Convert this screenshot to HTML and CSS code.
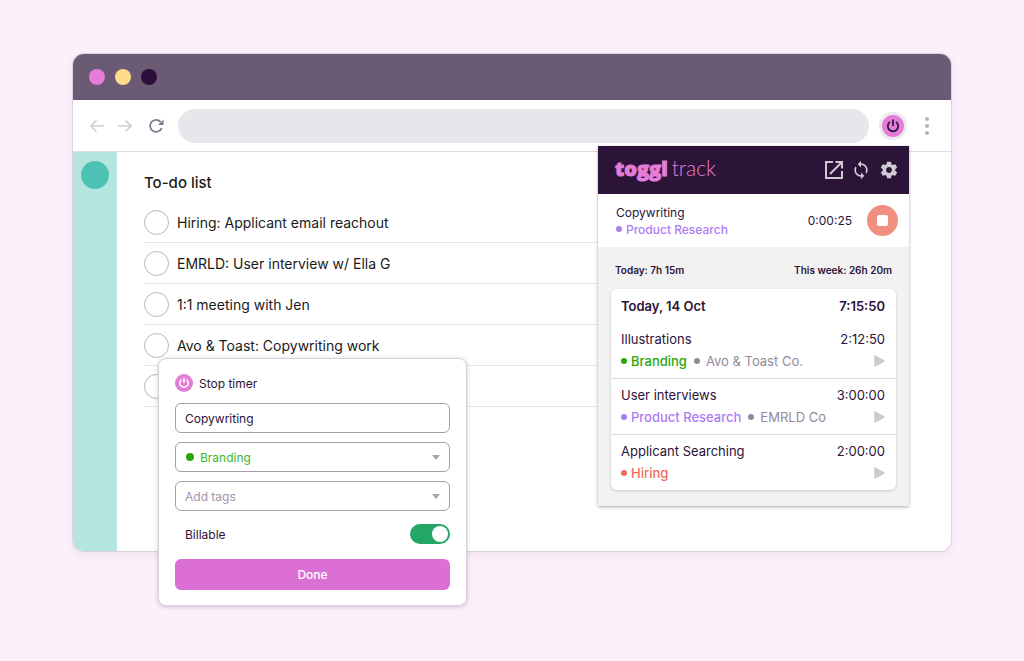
FILE: index.html
```html
<!DOCTYPE html>
<html lang="en">
<head>
    <meta charset="UTF-8">
    <meta name="viewport" content="width=device-width, initial-scale=1.0">
    <title>Toggl Track browser extension</title>
    <link rel="stylesheet" href="styles.css">
</head>
<body>
    <div class="browser">
        <div class="titlebar">
            <span class="light light-pink"></span>
            <span class="light light-yellow"></span>
            <span class="light light-dark"></span>
        </div>

        <div class="toolbar">
            <button class="nav-button" aria-label="Back">
                <svg width="14" height="14" viewBox="0 0 14 14" fill="none" stroke="#d3ccd7" stroke-width="1.6">
                    <path d="M14 7H1M6.5 1.5L1 7l5.500 5.500"/>
                </svg>
            </button>
            <button class="nav-button" aria-label="Forward">
                <svg width="14" height="14" viewBox="0 0 14 14" fill="none" stroke="#d3ccd7" stroke-width="1.6">
                    <path d="M0 7h13M7.500 1.500L13 7l-5.500 5.500"/>
                </svg>
            </button>
            <button class="nav-button" aria-label="Reload">
                <svg width="18" height="16" viewBox="-2 0 18 16" fill="none">
                    <path d="M13.700 10A6 6 0 1 1 12.600 3.900" stroke="#85758f" stroke-width="1.8"/>
                    <path d="M15.500 1.500V7H10z" fill="#85758f"/>
                </svg>
            </button>
            <input class="address" type="text" aria-label="Address">
            <button class="extension-button" aria-label="Toggl Track">
                <svg width="22" height="22" viewBox="0 0 22 22" fill="none">
                    <circle cx="11" cy="11" r="11" fill="#e57cd8"/>
                    <path d="M8 6.900a5.200 5.200 0 1 0 6 0M11 4.500V11" stroke="#2c1338" stroke-width="1.7"/>
                </svg>
            </button>
            <button class="nav-button menu-button" aria-label="Menu">
                <svg width="4" height="18" viewBox="0 0 4 18" fill="#b9b0bf">
                    <circle cx="2" cy="2" r="2"/>
                    <circle cx="2" cy="9" r="2"/>
                    <circle cx="2" cy="16" r="2"/>
                </svg>
            </button>
        </div>

        <div class="page">
            <div class="sidebar">
                <span class="avatar"></span>
            </div>
            <main class="todo">
                <h1>To-do list</h1>
                <ul class="todo-list">
                    <li><label><input type="checkbox"> Hiring: Applicant email reachout</label></li>
                    <li><label><input type="checkbox"> EMRLD: User interview w/ Ella G</label></li>
                    <li><label><input type="checkbox"> 1:1 meeting with Jen</label></li>
                    <li><label><input type="checkbox"> Avo &amp; Toast: Copywriting work</label></li>
                    <li><label><input type="checkbox" aria-label="Task"></label></li>
                </ul>
            </main>
        </div>

        <section class="tracker">
            <header class="tracker-header">
                <div class="logo"><span class="logo-toggl">toggl</span><span class="logo-track">track</span></div>
                <button class="icon-button" aria-label="Open">
                    <svg width="18" height="18" viewBox="0 0 18 18" fill="none" stroke="#cfcad1" stroke-width="2">
                        <path d="M8 1H1v16h16v-7M10.500 1H17v6.500M17 1L5 13"/>
                    </svg>
                </button>
                <button class="icon-button" aria-label="Sync">
                    <svg width="20" height="20" viewBox="0 0 24 24" fill="#cfcad1">
                        <path d="M12 4V1L8 5l4 4V6c3.310 0 6 2.690 6 6 0 1.010-.250 1.970-.700 2.800l1.460 1.460A7.930 7.930 0 0 0 20 12c0-4.420-3.580-8-8-8zm0 14c-3.310 0-6-2.690-6-6 0-1.010.250-1.970.700-2.800L5.240 7.740A7.930 7.930 0 0 0 4 12c0 4.420 3.580 8 8 8v3l4-4-4-4v3z"/>
                    </svg>
                </button>
                <button class="icon-button" aria-label="Settings">
                    <svg width="20" height="20" viewBox="0 0 24 24" fill="#cfcad1">
                        <path d="M19.430 12.980c.040-.320.070-.640.070-.980s-.030-.660-.070-.980l2.110-1.650c.190-.150.240-.420.120-.640l-2-3.460c-.120-.220-.390-.300-.610-.220l-2.490 1c-.520-.400-1.080-.730-1.690-.980l-.380-2.650A.488.488 0 0 0 14 2h-4c-.250 0-.460.180-.490.420l-.380 2.650c-.610.250-1.170.590-1.690.980l-2.490-1c-.230-.090-.490 0-.610.220l-2 3.460c-.130.220-.070.490.120.640l2.110 1.650c-.040.320-.070.650-.070.980s.030.660.070.980l-2.110 1.650c-.190.150-.240.420-.120.640l2 3.460c.120.220.390.300.610.220l2.490-1c.520.400 1.080.730 1.690.980l.380 2.650c.030.240.240.420.490.420h4c.250 0 .460-.180.490-.420l.380-2.650c.610-.250 1.170-.590 1.690-.980l2.490 1c.230.090.490 0 .610-.220l2-3.460c.120-.220.070-.490-.120-.640l-2.110-1.650zM12 15.500c-1.930 0-3.500-1.570-3.500-3.500s1.570-3.500 3.500-3.500 3.500 1.570 3.500 3.500-1.570 3.500-3.500 3.500z"/>
                    </svg>
                </button>
            </header>

            <div class="current">
                <div class="current-info">
                    <div>Copywriting</div>
                    <div class="project purple">Product Research</div>
                </div>
                <span class="current-time">0:00:25</span>
                <button class="stop-button" aria-label="Stop"><span></span></button>
            </div>

            <div class="summary">
                <span>Today: 7h 15m</span>
                <span>This week: 26h 20m</span>
            </div>

            <div class="entries">
                <div class="entries-head">
                    <span>Today, 14 Oct</span>
                    <span>7:15:50</span>
                </div>
                <div class="entry">
                    <div class="entry-row"><span>Illustrations</span><span>2:12:50</span></div>
                    <div class="entry-row">
                        <span class="project green">Branding</span>
                        <span class="client">Avo &amp; Toast Co.</span>
                        <button class="play-button" aria-label="Continue Illustrations">
                            <svg width="11" height="12" viewBox="0 0 11 12"><path d="M1 1v10l9-5z" fill="#cfc9d3" stroke="#cfc9d3" stroke-width="1.500" stroke-linejoin="round"/></svg>
                        </button>
                    </div>
                </div>
                <div class="entry">
                    <div class="entry-row"><span>User interviews</span><span>3:00:00</span></div>
                    <div class="entry-row">
                        <span class="project purple">Product Research</span>
                        <span class="client">EMRLD Co</span>
                        <button class="play-button" aria-label="Continue User interviews">
                            <svg width="11" height="12" viewBox="0 0 11 12"><path d="M1 1v10l9-5z" fill="#cfc9d3" stroke="#cfc9d3" stroke-width="1.500" stroke-linejoin="round"/></svg>
                        </button>
                    </div>
                </div>
                <div class="entry">
                    <div class="entry-row"><span>Applicant Searching</span><span>2:00:00</span></div>
                    <div class="entry-row">
                        <span class="project red">Hiring</span>
                        <button class="play-button" aria-label="Continue Applicant Searching">
                            <svg width="11" height="12" viewBox="0 0 11 12"><path d="M1 1v10l9-5z" fill="#cfc9d3" stroke="#cfc9d3" stroke-width="1.500" stroke-linejoin="round"/></svg>
                        </button>
                    </div>
                </div>
            </div>
        </section>

        <form class="timer-form">
            <button class="stop-timer" type="button">
                <svg width="18" height="18" viewBox="0 0 18 18" fill="none">
                    <circle cx="9" cy="9" r="9" fill="#e57cd8"/>
                    <path d="M6.600 5.600a4.200 4.200 0 1 0 4.800 0M9 4v5" stroke="#fff" stroke-width="1.500"/>
                </svg>
                Stop timer
            </button>
            <input class="field" type="text" value="Copywriting" aria-label="Description">
            <div class="field">
                <span class="dot"></span>
                <select class="green-text" aria-label="Project">
                    <option>Branding</option>
                </select>
                <svg class="caret" width="8" height="5" viewBox="0 0 8 5"><path d="M0 0h8L4 5z" fill="#aaa5ad"/></svg>
            </div>
            <div class="field">
                <select class="placeholder" aria-label="Tags">
                    <option>Add tags</option>
                </select>
                <svg class="caret" width="8" height="5" viewBox="0 0 8 5"><path d="M0 0h8L4 5z" fill="#aaa5ad"/></svg>
            </div>
            <label class="billable">Billable <input type="checkbox" checked></label>
            <button class="done-button" type="button">Done</button>
        </form>
    </div>
</body>
</html>
```
FILE: styles.css
```css
* {
    box-sizing: border-box;
}
body {
    display: flex;
    flex-direction: column;
    min-height: 100vh;
    margin: 0;
    padding: 54px 73px 110px;
    background: #fcf0fb;
    color: #2c1338;
    font-family: Inter, sans-serif;
    font-size: 13px;
}
button,
input,
select {
    margin: 0;
    font: inherit;
    color: inherit;
}
button {
    padding: 0;
    border: none;
    background: none;
    cursor: pointer;
}
svg {
    display: block;
}

/* Browser window */
.browser {
    position: relative;
    display: flex;
    flex: 1;
    flex-direction: column;
    border-radius: 11px;
    background: white;
    box-shadow: 0 0 1px 1px rgba(44,19,56,0.12), 0 4px 14px rgba(44,19,56,0.06);
}
.titlebar {
    display: flex;
    align-items: center;
    gap: 10px;
    height: 46px;
    padding: 0 16px;
    border-radius: 11px 11px 0 0;
    background: #6b5a73;
}
.light {
    width: 16px;
    height: 16px;
    border-radius: 50%;
}
.light-pink {
    background: #e57cd8;
}
.light-yellow {
    background: #ffdb8a;
}
.light-dark {
    background: #2c0f38;
}
.toolbar {
    display: flex;
    align-items: center;
    gap: 14px;
    height: 52px;
    padding: 0 22px 0 17px;
    border-bottom: 1px solid #dedbe0;
}
.nav-button {
    flex: none;
}
.address {
    flex: 1;
    min-width: 0;
    height: 34px;
    padding: 0 17px;
    border: none;
    border-radius: 17px;
    background: #e8e6eb;
}
.extension-button {
    display: flex;
    align-items: center;
    justify-content: center;
    width: 28px;
    height: 28px;
    margin-left: -4px;
    border-radius: 50%;
    background: #ebe9ed;
}
.menu-button {
    margin-left: 4px;
}

/* To-do page */
.page {
    display: flex;
    flex: 1;
}
.sidebar {
    width: 44px;
    padding-top: 9px;
    border-radius: 0 0 0 11px;
    background: #b4e6df;
}
.avatar {
    display: block;
    width: 28px;
    height: 28px;
    margin: 0 auto;
    border-radius: 50%;
    background: #4dc1b3;
}
.todo {
    flex: 1;
    padding: 19px 100px 0 27px;
    color: #1a1a1a;
}
.todo h1 {
    margin: 0 0 7px;
    font-size: 15px;
    font-weight: 500;
    line-height: 24px;
}
.todo-list {
    margin: 0;
    padding: 0;
    list-style: none;
    font-size: 14px;
}
.todo-list li {
    border-bottom: 1px solid #e8e6e9;
}
.todo-list label {
    display: flex;
    align-items: center;
    gap: 8px;
    height: 40px;
}
.todo-list input {
    width: 25px;
    height: 25px;
    border: 1px solid #bdb2c3;
    border-radius: 50%;
    appearance: none;
}

/* Extension popup */
.tracker {
    position: absolute;
    top: 92px;
    right: 42px;
    width: 311px;
    padding-bottom: 16px;
    background: #f2f2f2;
    box-shadow: 0 1px 3px rgba(0,0,0,0.35);
}
.tracker-header {
    display: flex;
    align-items: center;
    gap: 8px;
    height: 48px;
    padding: 0 10px 0 17px;
    background: #2c1338;
}
.logo {
    display: flex;
    flex: 1;
    align-items: baseline;
    gap: 4px;
    padding-bottom: 4px;
    color: #e57cd8;
    line-height: 24px;
}
.logo-toggl {
    font-family: "Open Sans", sans-serif;
    font-size: 20px;
    font-weight: 800;
    -webkit-text-stroke: 1px #e57cd8;
}
.logo-track {
    font-family: Lato, sans-serif;
    font-size: 21px;
    font-weight: 300;
}
.current {
    display: flex;
    align-items: center;
    height: 53px;
    padding: 0 11px 0 18px;
    background: white;
}
.current-info {
    flex: 1;
    font-size: 12px;
    line-height: 17px;
}
.current-time {
    font-size: 12px;
}
.stop-button {
    display: flex;
    align-items: center;
    justify-content: center;
    width: 31px;
    height: 31px;
    margin-left: 15px;
    border-radius: 50%;
    background: #f08f80;
}
.stop-button span {
    width: 11px;
    height: 11px;
    border-radius: 2px;
    background: white;
}
.project::before,
.client::before {
    content: "";
    display: inline-block;
    width: 6px;
    height: 6px;
    margin-right: 4px;
    border-radius: 50%;
    background: currentColor;
    vertical-align: 2px;
}
.project {
    font-weight: 500;
}
.purple {
    color: #ac7cf5;
}
.green {
    color: #28a80c;
}
.red {
    color: #ee6c5c;
}
.client {
    margin-left: 7px;
    color: #94899b;
}
.client::before {
    margin-right: 6px;
}
.summary {
    display: flex;
    justify-content: space-between;
    padding: 15px 17px 10px;
    font-size: 10px;
    font-weight: 600;
    line-height: 17px;
}
.entries {
    margin: 0 13px;
    border-radius: 6px;
    background: white;
    box-shadow: 0 1px 3px rgba(0,0,0,0.18);
}
.entries-head {
    display: flex;
    justify-content: space-between;
    padding: 0 11px 0 10px;
    font-weight: 600;
    line-height: 34px;
}
.entry {
    padding: 5px 11px 6px 10px;
    line-height: 22px;
}
.entry + .entry {
    border-top: 1px solid #dcdadd;
}
.entry-row {
    display: flex;
    justify-content: space-between;
}
.play-button {
    margin-left: auto;
}

/* Timer form */
.timer-form {
    position: absolute;
    top: 304px;
    left: 85px;
    display: flex;
    flex-direction: column;
    gap: 9px;
    width: 309px;
    padding: 15px 16px;
    border: 1px solid #d8d3db;
    border-radius: 8px;
    background: white;
    box-shadow: 0 1px 4px rgba(44,19,56,0.22);
    font-size: 12px;
}
.stop-timer {
    display: flex;
    align-items: center;
    align-self: flex-start;
    gap: 6px;
    height: 18px;
    margin-bottom: 2px;
}
.field {
    display: flex;
    align-items: center;
    width: 100%;
    height: 30px;
    padding: 0 9px;
    border: 1px solid #a79bae;
    border-radius: 6px;
    background: white;
}
.field select {
    flex: 1;
    padding: 0;
    border: none;
    background: none;
    appearance: none;
}
.field .green-text {
    color: #3fb528;
}
.field .placeholder {
    color: #a095a6;
}
.dot {
    width: 8px;
    height: 8px;
    margin: 0 6px 0 1px;
    border-radius: 50%;
    background: #28a80c;
}
.billable {
    display: flex;
    align-items: center;
    justify-content: space-between;
    height: 28px;
    padding-left: 10px;
}
.billable input {
    width: 40px;
    height: 20px;
    padding: 2px;
    border-radius: 10px;
    background: #22a765;
    appearance: none;
}
.billable input::before {
    content: "";
    display: block;
    width: 16px;
    height: 16px;
    border-radius: 50%;
    background: white;
}
.billable input:checked::before {
    margin-left: auto;
}
.done-button {
    height: 31px;
    margin-top: 2px;
    border-radius: 6px;
    background: #dc6fd3;
    color: white;
    font-weight: 500;
}
```
